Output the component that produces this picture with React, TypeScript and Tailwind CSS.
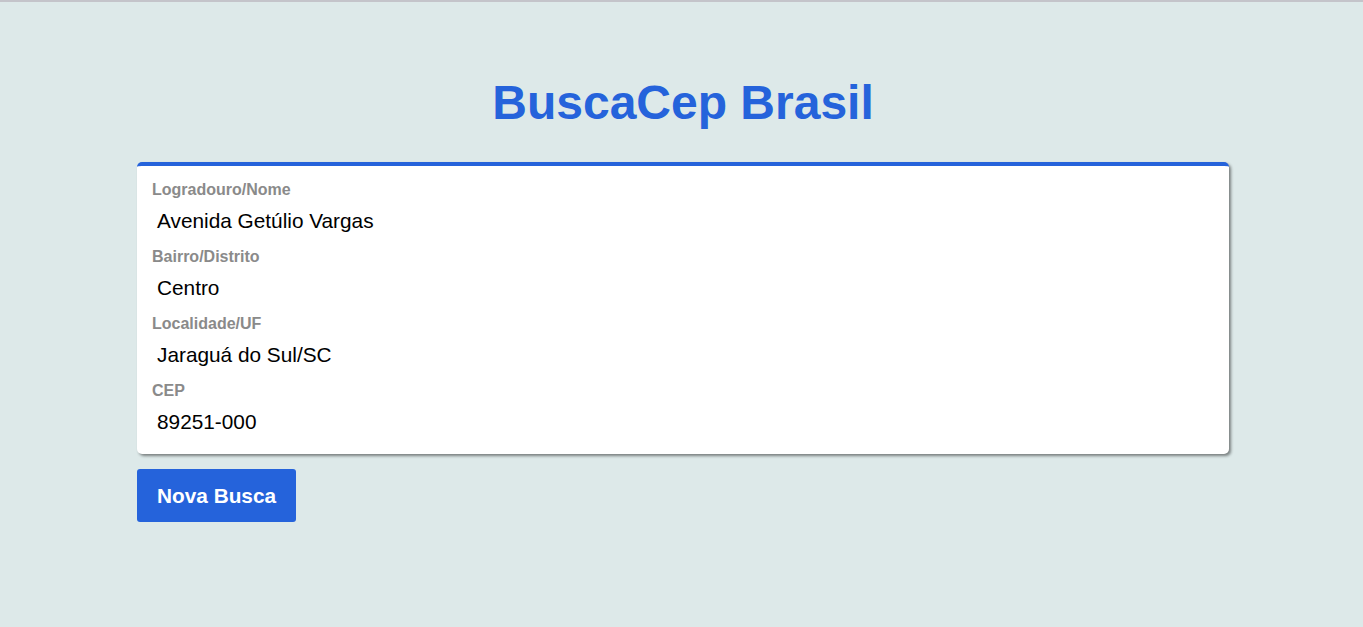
import React from 'react';

const fields = [
  { label: 'Logradouro/Nome', value: 'Avenida Getúlio Vargas' },
  { label: 'Bairro/Distrito', value: 'Centro' },
  { label: 'Localidade/UF', value: 'Jaraguá do Sul/SC' },
  { label: 'CEP', value: '89251-000' },
];

export default function App() {
  return (
    <div className="min-h-screen bg-[#dde9e9] border-t-[2px] border-[#c4c4ca] pl-[3px] font-['Liberation_Sans',Arial,sans-serif]">
      <div className="w-[1092px] mx-auto pt-[73px]">
        <h1 className="text-center text-[48px] leading-[55px] font-bold text-[#2563db]">BuscaCep Brasil</h1>

        {/* Result card */}
        <div className="mt-[32px] bg-white rounded-[5px] border-t-4 border-[#2563db] shadow-[2px_2px_3px_rgba(0,0,0,0.45)] pt-[14px] pb-[16px] px-[15px]">
          {fields.map((f, i) => (
            <div key={f.label} className={i > 0 ? 'mt-[10px]' : ''}>
              <div className="text-[16px] leading-[20px] font-bold text-[#8a8a8a]">{f.label}</div>
              <div className="mt-[5px] pl-[5px] text-[20.8px] leading-[32px] text-black">{f.value}</div>
            </div>
          ))}
        </div>

        <button className="mt-[15px] h-[53px] px-[20px] rounded-[3px] bg-[#2563db] text-white text-[20.8px] font-bold">
          Nova Busca
        </button>
      </div>
    </div>
  );
}
